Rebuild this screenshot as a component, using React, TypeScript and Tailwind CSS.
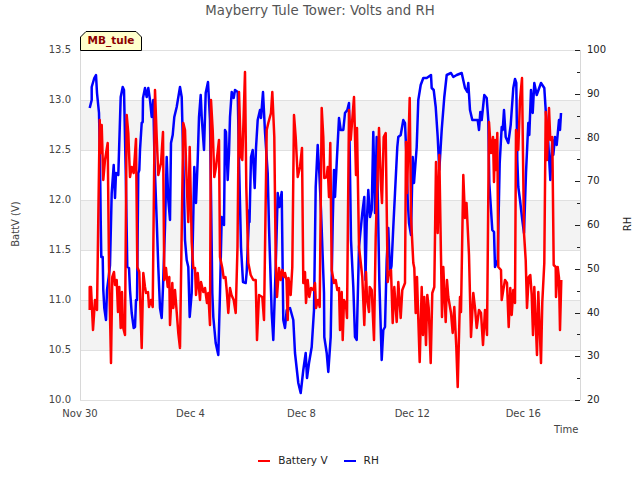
import React from 'react';

const font = '"DejaVu Sans", sans-serif';

// traced from the plot, in page pixels
const rh = `89.7,108 91.7,100 91.7,87 94.3,78 96,75 97,93 99,113 100,160 100.7,220 101.3,257 102.7,257 103.3,290 104.3,308 106,320 107,290 108.7,277 110,265 111.7,193 113.7,165 115,198 116,173 118.3,175 120.7,97 122.7,87 124,90 125.7,170 127.3,267 129,268 130,290 131.7,313 133.7,328 135,327 136,300 137,300 138.3,173 139.3,170 140,150 141.7,123 142.7,122 143,98 145,88 146.7,97 148.3,88 150,100 151.7,117 153.3,100 154.5,160 156.7,220 158.3,267 160,308 161.7,318 163,287 165,227 166.7,157 168.3,200 170,220 171,143 172.7,135 174.3,117 176.7,107 180,87 181.7,97 183.3,160 185,240 186.7,260 188.3,267 189.7,317 191.7,293 194.3,167 196,203 197.7,160 199,117 200.7,95 201.7,117 204,150 205.7,93 208,82 210,120 211,193 212.3,293 213.3,317 215.7,343 218.3,355 220,293 221.7,217 224,225 225,130 226,132 227.7,180 229,153 230,117 231.7,92 233.7,98 235,90 237.7,92 239,160 241,247 243,282 245.7,283 246.7,272 249.3,210 249.5,222 251,157 252.7,150 254.7,188 256,148 257.7,120 260,110 261,118 263,92 265,132 267.7,173 269,227 271.7,313 273.3,340 275.7,267 277.7,193 279.3,207 281.7,192 283.3,320 285,328 286.7,310 290,308 293.3,320 295,353 298.3,383 300.7,393 303.3,370 305.7,353 307,378 309,363 311.7,347 314,310 315.7,187 317.7,145 319.3,173 321,210 324,293 324.3,337 326.7,353 328.3,372 330.7,337 332.7,223 334,170 335,197 336.7,163 339,118 340.7,130 343.3,130 345,113 347.3,110 349,103 351,240 353.3,287 355,337 356.7,340 359,247 362.3,213 364.3,197 365.5,280 366.7,223 368.3,190 370,217 371.7,210 373.3,132 375,213 376.7,137 379.3,280 381.7,360 383.3,330 385,327 386.7,260 388.3,228 390,273 391.5,266 393.3,227 395,193 397.3,147 398.3,137 400.7,135 403.3,120 405,123 406.5,157 407.7,200 409,223 411,235 412.7,157 414,183 416.7,147 418.3,100 420.7,85 423.3,78 426.7,78 431,75 431.7,88 433.7,90 435.7,107 437.7,137 439.3,170 441.7,130 444.3,97 446.7,75 451,73 453.3,77 456.7,75 461.7,73 465,88 467.3,92 468.3,83 470,110 472.3,120 475,120 477.7,120 479,130 480.3,112 481.7,120 484.3,95 486.7,98 488.3,120 489.3,183 492.3,230 494,232 495,267 497.7,260 499.7,163 501.7,127 502.7,130 504,110 505.7,137 508.3,143 510.7,125 513.3,88 515,79 516.3,83 517.3,160 518.3,187 520,200 522.3,220 524,233 526,173 528.3,123 529.3,135 531,90 532.7,113 534.3,83 536.7,95 541,83 544.3,88 545.7,110 548.3,143 550.3,180 552.3,140 553.3,155 555,137 556.7,145 559,120 560,130 561,113`;

const batt = `89.7,310 89.7,287 91,287 93,330 95,300 97,310 99.7,120 100.7,153 101.7,125 103.3,180 105,160 107.7,143 109,267 111,363 112.3,277 114,272 115,285 116.7,280 118,312 119.3,287 120.7,328 122,292 123,327 125,335 126.7,115 128.3,133 130,177 131.7,167 133.7,173 136,139 137.3,267 139.3,272 141.7,348 143.3,273 145,287 146,293 148,292 149,307 151,300 152.7,307 155,90 156.7,137 158.3,175 161,163 163,132 164.3,280 166,268 167.7,287 169.3,277 170,325 172.3,283 173.3,308 175,290 178.3,333 180,348 183.3,123 185,130 186.7,183 188.3,222 189.7,147 191.7,242 193.3,268 195,268 196,295 197.7,273 200,300 201,282 203.3,292 205,288 207,303 208.3,293 210,325 211,100 212.7,130 214.3,177 216,167 219,140 220,257 222.3,268 223.7,278 225.5,277 226.7,290 228.3,313 230,288 231.5,295 233.7,300 235.7,313 237.5,247 239,92 241,157 242.3,160 245,72 246.3,187 248.3,263 250.7,275 253.3,280 255.7,280 257,340 259,295 262.3,297 264,320 266.7,130 268.3,123 271,113 272.3,92 274.3,137 275.7,260 277,297 279,268 280.7,280 282.3,270 284.3,277 285,273 286.5,280 287.7,320 288.5,278 290.7,295 292.3,267 294,115 295.7,137 297.7,177 300,167 302,148 303.3,283 305,272 306,303 307.7,280 309.3,297 311,288 313.3,290 315,283 316,308 318,300 319.7,307 321.7,108 323.3,137 324.3,178 326.7,177 327.7,167 329,197 330.3,143 331.7,270 334,283 335.7,280 337.3,290 339,288 340,330 341.7,292 342.7,340 344,300 346,305 347,318 349,110 350.7,140 354,97 356,175 357,128 359,247 361,265 362.3,277 364.3,325 366,272 367,298 369,312 369.7,287 371.7,290 374,340 375.7,237 379,128 380.7,180 382,203 383.7,137 385.7,133 387.7,282 389,273 391,270 392.7,323 394.3,287 396.7,322 398.3,282 400.7,318 402.3,290 405,283 406,142 407,193 409.7,98 411,217 413.3,263 414.3,268 415.7,313 417,277 418,310 419.7,362 421.7,287 423,335 424.3,297 426,345 427.3,295 428.7,308 430.7,363 432.3,293 434.3,287 436,162 437.7,233 439.3,155 442,317 443.3,267 445.7,322 447,280 448.3,297 451,313 452.7,333 454.3,307 456.3,347 457.7,387 460,297 461,312 463.3,175 465,218 466.5,203 469,255 471,337 473.3,293 475,308 476.7,328 479,310 481,313 483,345 485,310 487,335 489,122 491,153 493,137 494,182 495,140 496.3,170 497.3,133 498.3,267 501,270 501.7,300 503.3,290 505,280 507,283 508.7,327 510.3,288 511.7,315 513.3,290 515,303 516,130 518.3,150 520,100 522,78 524,233 525.7,260 527,308 528.7,277 530.3,275 531.7,295 533,335 534.3,287 537,355 538.3,292 541,363 542.3,302 544.3,263 545.7,112 547,160 549,108 550.3,140 552.3,137 553.7,265 555.7,267 556,297 557.7,267 559,278 560,330 561.3,280`;

const bands = [100, 200, 300];
const grid = [50, 100, 150, 200, 250, 300, 350, 400];
const leftLabels = ['13.5', '13.0', '12.5', '12.0', '11.5', '11.0', '10.5', '10.0'];
const dates = [
  { x: 80, label: 'Nov 30' },
  { x: 190.5, label: 'Dec 4' },
  { x: 301.5, label: 'Dec 8' },
  { x: 412.3, label: 'Dec 12' },
  { x: 523.3, label: 'Dec 16' },
];
const rightLabels = ['100', '90', '80', '70', '60', '50', '40', '30', '20'];

function Chart() {
  return (
    <svg width="640" height="428" viewBox="0 22 640 428" className="block" style={{ fontFamily: font }}>
      {bands.map((y) => (
        <rect key={y} x="80" y={y} width="500" height="50" fill="#f3f3f3" />
      ))}
      {grid.map((y) => (
        <line key={y} x1="80" x2="580" y1={y + 0.5} y2={y + 0.5} stroke="#e0e0e0" />
      ))}
      <line x1="80.5" x2="80.5" y1="50" y2="400" stroke="#d8d8d8" />
      <line x1="580.5" x2="580.5" y1="50" y2="400" stroke="#d8d8d8" />

      {Array.from({ length: 17 }, (_, i) => {
        const y = Math.round(50 + i * 21.875);
        return (
          <line key={i} x1={i % 2 === 0 ? 575 : 577} x2="580" y1={y + 0.5} y2={y + 0.5} stroke="#222" />
        );
      })}

      <polyline points={rh} fill="none" stroke="#0000ff" strokeWidth="2.5" strokeLinejoin="round" />
      <polyline points={batt} fill="none" stroke="#ff0000" strokeWidth="2.5" strokeLinejoin="round" />

      {leftLabels.map((t, i) => (
        <text key={t} x="71" y={53 + i * 50} textAnchor="end" fontSize="10" fill="#444">
          {t}
        </text>
      ))}
      {rightLabels.map((t, i) => (
        <text key={t} x="587" y={53 + i * 43.75} fontSize="10" fill="#222">
          {t}
        </text>
      ))}
      {dates.map((d) => (
        <text key={d.label} x={d.x} y="417" textAnchor="middle" fontSize="10" fill="#444">
          {d.label}
        </text>
      ))}
      <text x="578.5" y="433" textAnchor="end" fontSize="10" fill="#444">
        Time
      </text>
      <text transform="translate(19 224) rotate(-90)" textAnchor="middle" fontSize="10" fill="#444">
        BattV (V)
      </text>
      <text transform="translate(631 224) rotate(-90)" textAnchor="middle" fontSize="10" fill="#222">
        RH
      </text>
    </svg>
  );
}

export default function App() {
  return (
    <div className="relative w-[640px] h-[480px] bg-white overflow-hidden font-['DejaVu_Sans',sans-serif]">
      <div className="h-[22px] flex items-center justify-center text-[13.3px] text-[#555]">
        Mayberry Tule Tower: Volts and RH
      </div>
      <Chart />
      <div className="flex justify-center items-center gap-2 h-[21px] text-[10.5px] text-[#222] pr-[3px]">
        <span className="w-3 h-0.5 bg-[#ff0000]" />
        <span className="mr-2">Battery V</span>
        <span className="w-3 h-0.5 bg-[#0000ff]" />
        <span>RH</span>
      </div>

      <div className="absolute left-[80px] top-[31px] w-[62px] h-[20px] flex items-center justify-center text-[10.5px] font-bold text-[#8b0000]">
        <svg width="62" height="20" className="absolute inset-0">
          <polygon points="0.5,19.5 0.5,6 6,0.5 56,0.5 61.5,6 61.5,19.5" fill="#ffffcc" stroke="#000" />
        </svg>
        <span className="relative">MB_tule</span>
      </div>
    </div>
  );
}
